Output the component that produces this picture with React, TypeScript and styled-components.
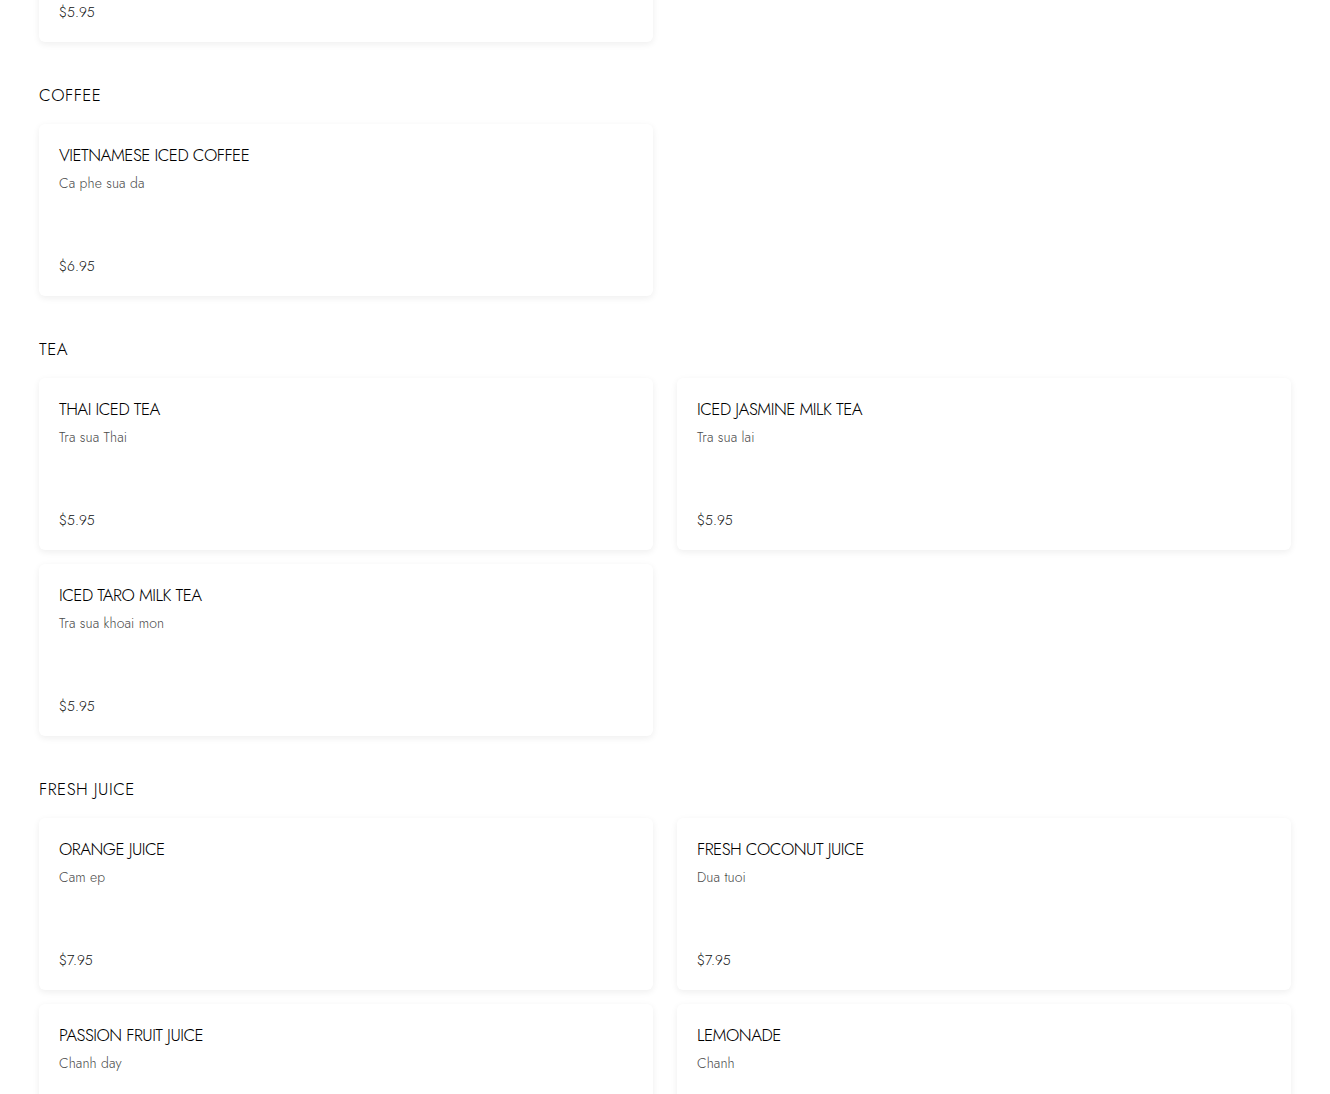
import React from "react";
import styled, { createGlobalStyle } from "styled-components";

const GlobalStyle = createGlobalStyle`
  html, body { margin: 0; padding: 0; background: #ffffff; }
  body { font-family: Jost, Lato, "Noto Sans", sans-serif; color: #111; }
  * { box-sizing: border-box; }
`;

const Page = styled.main`
  padding: 0 39px;
  overflow: hidden;
`;

const Section = styled.section<{ $first?: boolean }>`
  margin-top: ${(p) => (p.$first ? "-130px" : "40px")};
`;

const Heading = styled.h2`
  margin: 0 0 16px;
  font-size: 17px;
  line-height: 26px;
  font-weight: 300;
  letter-spacing: 0.5px;
  text-transform: uppercase;
  color: #000;
`;

const Grid = styled.div`
  display: grid;
  grid-template-columns: repeat(2, 1fr);
  column-gap: 24px;
  row-gap: 14px;
`;

const Card = styled.article`
  display: flex;
  flex-direction: column;
  min-height: 172px;
  padding: 20px;
  background: #fff;
  border-radius: 6px;
  box-shadow: 0 2px 7px rgba(0, 0, 0, 0.07);
`;

const Title = styled.h3`
  margin: 0;
  font-size: 17px;
  line-height: 22px;
  font-weight: 300;
  letter-spacing: -0.5px;
  text-transform: uppercase;
  color: #000;
`;

const Desc = styled.p`
  margin: 7px 0 0;
  font-size: 14px;
  line-height: 20px;
  font-weight: 300;
  letter-spacing: 0.1px;
  color: #4a4a4a;
`;

const Price = styled.div`
  margin-top: auto;
  font-size: 14px;
  line-height: 20px;
  font-weight: 300;
  color: #111;
`;

type Item = { name: string; desc: string; price: string };
type Group = { title: string; items: Item[] };

const groups: Group[] = [
  {
    title: "Smoothies",
    items: [{ name: "Avocado Smoothie", desc: "Sinh to bo", price: "$5.95" }],
  },
  {
    title: "Coffee",
    items: [{ name: "Vietnamese Iced Coffee", desc: "Ca phe sua da", price: "$6.95" }],
  },
  {
    title: "Tea",
    items: [
      { name: "Thai Iced Tea", desc: "Tra sua Thai", price: "$5.95" },
      { name: "Iced Jasmine Milk Tea", desc: "Tra sua lai", price: "$5.95" },
      { name: "Iced Taro Milk Tea", desc: "Tra sua khoai mon", price: "$5.95" },
    ],
  },
  {
    title: "Fresh Juice",
    items: [
      { name: "Orange Juice", desc: "Cam ep", price: "$7.95" },
      { name: "Fresh Coconut Juice", desc: "Dua tuoi", price: "$7.95" },
      { name: "Passion Fruit Juice", desc: "Chanh day", price: "$7.95" },
      { name: "Lemonade", desc: "Chanh", price: "$7.95" },
    ],
  },
];

export default function App() {
  return (
    <>
      <GlobalStyle />
      <Page>
        {groups.map((g, gi) => (
          <Section key={g.title} $first={gi === 0}>
            {gi > 0 && <Heading>{g.title}</Heading>}
            <Grid>
              {g.items.map((it) => (
                <Card key={it.name}>
                  <Title>{it.name}</Title>
                  <Desc>{it.desc}</Desc>
                  <Price>{it.price}</Price>
                </Card>
              ))}
            </Grid>
          </Section>
        ))}
      </Page>
    </>
  );
}
